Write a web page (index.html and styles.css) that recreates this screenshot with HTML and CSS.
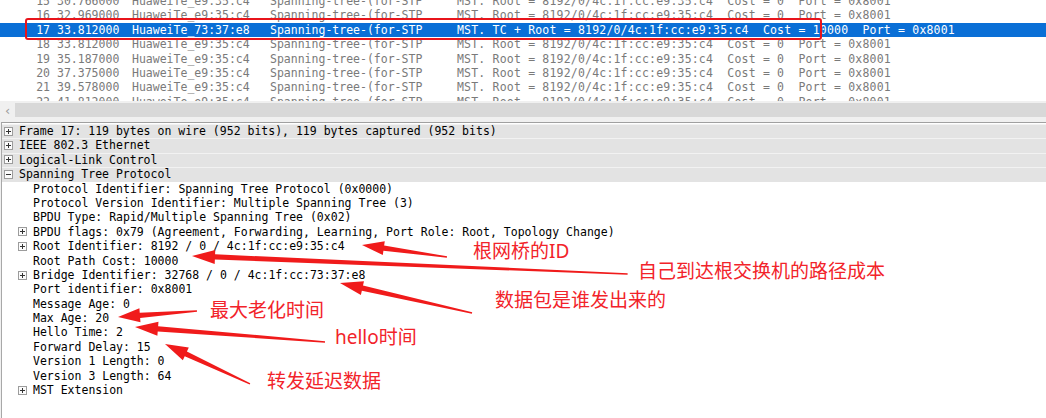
FILE: index.html
```html
<!DOCTYPE html>
<html>
<head>
<meta charset="utf-8">
<link rel="stylesheet" href="styles.css">
</head>
<body>
<div class="app">
  <div class="list">
    <div class="rows">
      <div class="row"><span class="no">15</span><span class="time">30.766000</span><span class="src">HuaweiTe_e9:35:c4</span><span class="dst">Spanning-tree-(for-STP</span><span class="info">MST. Root = 8192/0/4c:1f:cc:e9:35:c4  Cost = 0  Port = 0x8001</span></div>
      <div class="row"><span class="no">16</span><span class="time">32.969000</span><span class="src">HuaweiTe_e9:35:c4</span><span class="dst">Spanning-tree-(for-STP</span><span class="info">MST. Root = 8192/0/4c:1f:cc:e9:35:c4  Cost = 0  Port = 0x8001</span></div>
      <div class="row sel"><span class="no">17</span><span class="time">33.812000</span><span class="src">HuaweiTe_73:37:e8</span><span class="dst">Spanning-tree-(for-STP</span><span class="info">MST. TC + Root = 8192/0/4c:1f:cc:e9:35:c4  Cost = 10000  Port = 0x8001</span></div>
      <div class="row"><span class="no">18</span><span class="time">33.812000</span><span class="src">HuaweiTe_e9:35:c4</span><span class="dst">Spanning-tree-(for-STP</span><span class="info">MST. Root = 8192/0/4c:1f:cc:e9:35:c4  Cost = 0  Port = 0x8001</span></div>
      <div class="row"><span class="no">19</span><span class="time">35.187000</span><span class="src">HuaweiTe_e9:35:c4</span><span class="dst">Spanning-tree-(for-STP</span><span class="info">MST. Root = 8192/0/4c:1f:cc:e9:35:c4  Cost = 0  Port = 0x8001</span></div>
      <div class="row"><span class="no">20</span><span class="time">37.375000</span><span class="src">HuaweiTe_e9:35:c4</span><span class="dst">Spanning-tree-(for-STP</span><span class="info">MST. Root = 8192/0/4c:1f:cc:e9:35:c4  Cost = 0  Port = 0x8001</span></div>
      <div class="row"><span class="no">21</span><span class="time">39.578000</span><span class="src">HuaweiTe_e9:35:c4</span><span class="dst">Spanning-tree-(for-STP</span><span class="info">MST. Root = 8192/0/4c:1f:cc:e9:35:c4  Cost = 0  Port = 0x8001</span></div>
      <div class="row"><span class="no">22</span><span class="time">41.812000</span><span class="src">HuaweiTe_e9:35:c4</span><span class="dst">Spanning-tree-(for-STP</span><span class="info">MST. Root = 8192/0/4c:1f:cc:e9:35:c4  Cost = 0  Port = 0x8001</span></div>
    </div>
  </div>
  <div class="hscroll"><span class="sarrow">&lsaquo;</span><div class="track"></div></div>
  <div class="details">
    <div class="node l0 bar"><span class="exp plus"></span>Frame 17: 119 bytes on wire (952 bits), 119 bytes captured (952 bits)</div>
    <div class="node l0 bar"><span class="exp plus"></span>IEEE 802.3 Ethernet</div>
    <div class="node l0 bar"><span class="exp plus"></span>Logical-Link Control</div>
    <div class="node l0 bar"><span class="exp minus"></span>Spanning Tree Protocol</div>
    <div class="node l1"><span class="exp none"></span>Protocol Identifier: Spanning Tree Protocol (0x0000)</div>
    <div class="node l1"><span class="exp none"></span>Protocol Version Identifier: Multiple Spanning Tree (3)</div>
    <div class="node l1"><span class="exp none"></span>BPDU Type: Rapid/Multiple Spanning Tree (0x02)</div>
    <div class="node l1"><span class="exp plus"></span>BPDU flags: 0x79 (Agreement, Forwarding, Learning, Port Role: Root, Topology Change)</div>
    <div class="node l1"><span class="exp plus"></span>Root Identifier: 8192 / 0 / 4c:1f:cc:e9:35:c4</div>
    <div class="node l1"><span class="exp none"></span>Root Path Cost: 10000</div>
    <div class="node l1"><span class="exp plus"></span>Bridge Identifier: 32768 / 0 / 4c:1f:cc:73:37:e8</div>
    <div class="node l1"><span class="exp none"></span>Port identifier: 0x8001</div>
    <div class="node l1"><span class="exp none"></span>Message Age: 0</div>
    <div class="node l1"><span class="exp none"></span>Max Age: 20</div>
    <div class="node l1"><span class="exp none"></span>Hello Time: 2</div>
    <div class="node l1"><span class="exp none"></span>Forward Delay: 15</div>
    <div class="node l1"><span class="exp none"></span>Version 1 Length: 0</div>
    <div class="node l1"><span class="exp none"></span>Version 3 Length: 64</div>
    <div class="node l1"><span class="exp plus"></span>MST Extension</div>
  </div>

  <div class="highlight"></div>
  <svg class="arrows" width="1046" height="418" viewBox="0 0 1046 418">
    <g fill="#f01b1b">
      <polygon transform="translate(362 245) rotate(8.04)" points="0,0 22,-7 22,-2.6 85.8,-0.7 85.8,0.7 22,2.6 22,7"/>
      <polygon transform="translate(192 256) rotate(2.36)" points="0,0 23,-7 23,-2.6 436,-0.8 436,0.8 23,2.6 23,7"/>
      <polygon transform="translate(340 283) rotate(12.8)" points="0,0 23,-7 23,-2.6 135.4,-0.7 135.4,0.7 23,2.6 23,7"/>
      <polygon transform="translate(118 317) rotate(-4.34)" points="0,0 22,-7 22,-2.6 79.2,-0.7 79.2,0.7 22,2.6 22,7"/>
      <polygon transform="translate(135 327) rotate(4.51)" points="0,0 23,-7 23,-2.6 190.6,-0.7 190.6,0.7 23,2.6 23,7"/>
      <polygon transform="translate(165 344) rotate(25.2)" points="0,0 23,-7 23,-2.6 93.9,-0.7 93.9,0.7 23,2.6 23,7"/>
    </g>
  </svg>
  <div class="label lab-root">根网桥的ID</div>
  <div class="label lab-cost">自己到达根交换机的路径成本</div>
  <div class="label lab-bridge">数据包是谁发出来的</div>
  <div class="label lab-max">最大老化时间</div>
  <div class="label lab-hello">hello时间</div>
  <div class="label lab-fwd">转发延迟数据</div>
</div>
</body>
</html>
```

FILE: styles.css
```css
html, body {
  margin: 0;
  padding: 0;
}
body {
  width: 1046px;
  height: 418px;
  overflow: hidden;
  background: #f0f0f0;
  font-family: "DejaVu Sans Mono", "Liberation Mono", monospace;
  font-size: 11.5px;
}
.app {
  position: relative;
  width: 1046px;
  height: 418px;
  display: flex;
  flex-direction: column;
}
.list {
  height: 101px;
  overflow: hidden;
  background: #fff;
  flex: none;
}
.rows {
  margin-top: -6px;
}
.row {
  display: flex;
  height: 14.4px;
  line-height: 14.4px;
  white-space: pre;
  color: #7a7a7a;
}
.row.sel {
  background: #0a6fd6;
  color: #fff;
}
.no {
  width: 50px;
  text-align: right;
  flex: none;
}
.time {
  width: 82px;
  padding-left: 7px;
  box-sizing: border-box;
  flex: none;
}
.src {
  width: 138px;
  flex: none;
}
.dst {
  width: 187px;
  flex: none;
}
.info {
  flex: none;
  letter-spacing: 0.19px;
}
.hscroll {
  height: 18px;
  flex: none;
  display: flex;
  align-items: center;
  background: #f0f0f0;
}
.sarrow {
  width: 15px;
  text-align: center;
  color: #9a9a9a;
  font-family: "DejaVu Sans", sans-serif;
  font-size: 13px;
}
.track {
  flex: 1;
  height: 14px;
  background: #d8d8d8;
}
.details {
  flex: 1;
  margin-top: 3px;
  border-top: 1px solid #a0a0a0;
  border-left: 1px solid #a8a8a8;
  margin-left: 1px;
  background: #fff;
  padding-top: 1px;
  color: #000;
}
.node {
  display: flex;
  align-items: center;
  height: 14.4px;
  line-height: 14.4px;
  white-space: pre;
}
.node.bar {
  background: #e3e3e3;
  box-shadow: inset 0 1px 0 #f2f2f2;
}
.l0 {
  padding-left: 2px;
}
.l1 {
  padding-left: 16px;
}
.exp {
  width: 7px;
  height: 7px;
  border: 1px solid #9c9c9c;
  background: #fbfbfb;
  margin-right: 6px;
  position: relative;
  flex: none;
}
.exp.none {
  visibility: hidden;
}
.exp::before {
  content: "";
  position: absolute;
  left: 1px;
  top: 3px;
  width: 5px;
  height: 1px;
  background: #333;
}
.exp.plus::after {
  content: "";
  position: absolute;
  left: 3px;
  top: 1px;
  width: 1px;
  height: 5px;
  background: #333;
}
.highlight {
  position: absolute;
  left: 25px;
  top: 18px;
  width: 793px;
  height: 18px;
  border: 2.5px solid #e8141b;
  border-radius: 3px;
}
.arrows {
  position: absolute;
  left: 0;
  top: 0;
}
.label {
  position: absolute;
  font-family: "Noto Sans", "Noto Sans CJK SC", sans-serif;
  font-size: 19px;
  line-height: 1;
  color: #f2232a;
  white-space: nowrap;
}
.lab-root { left: 473px; top: 242px; }
.lab-cost { left: 638px; top: 262px; }
.lab-bridge { left: 495px; top: 291px; }
.lab-max { left: 210px; top: 301px; }
.lab-hello { left: 335px; top: 328px; }
.lab-fwd { left: 267px; top: 372px; }
```
